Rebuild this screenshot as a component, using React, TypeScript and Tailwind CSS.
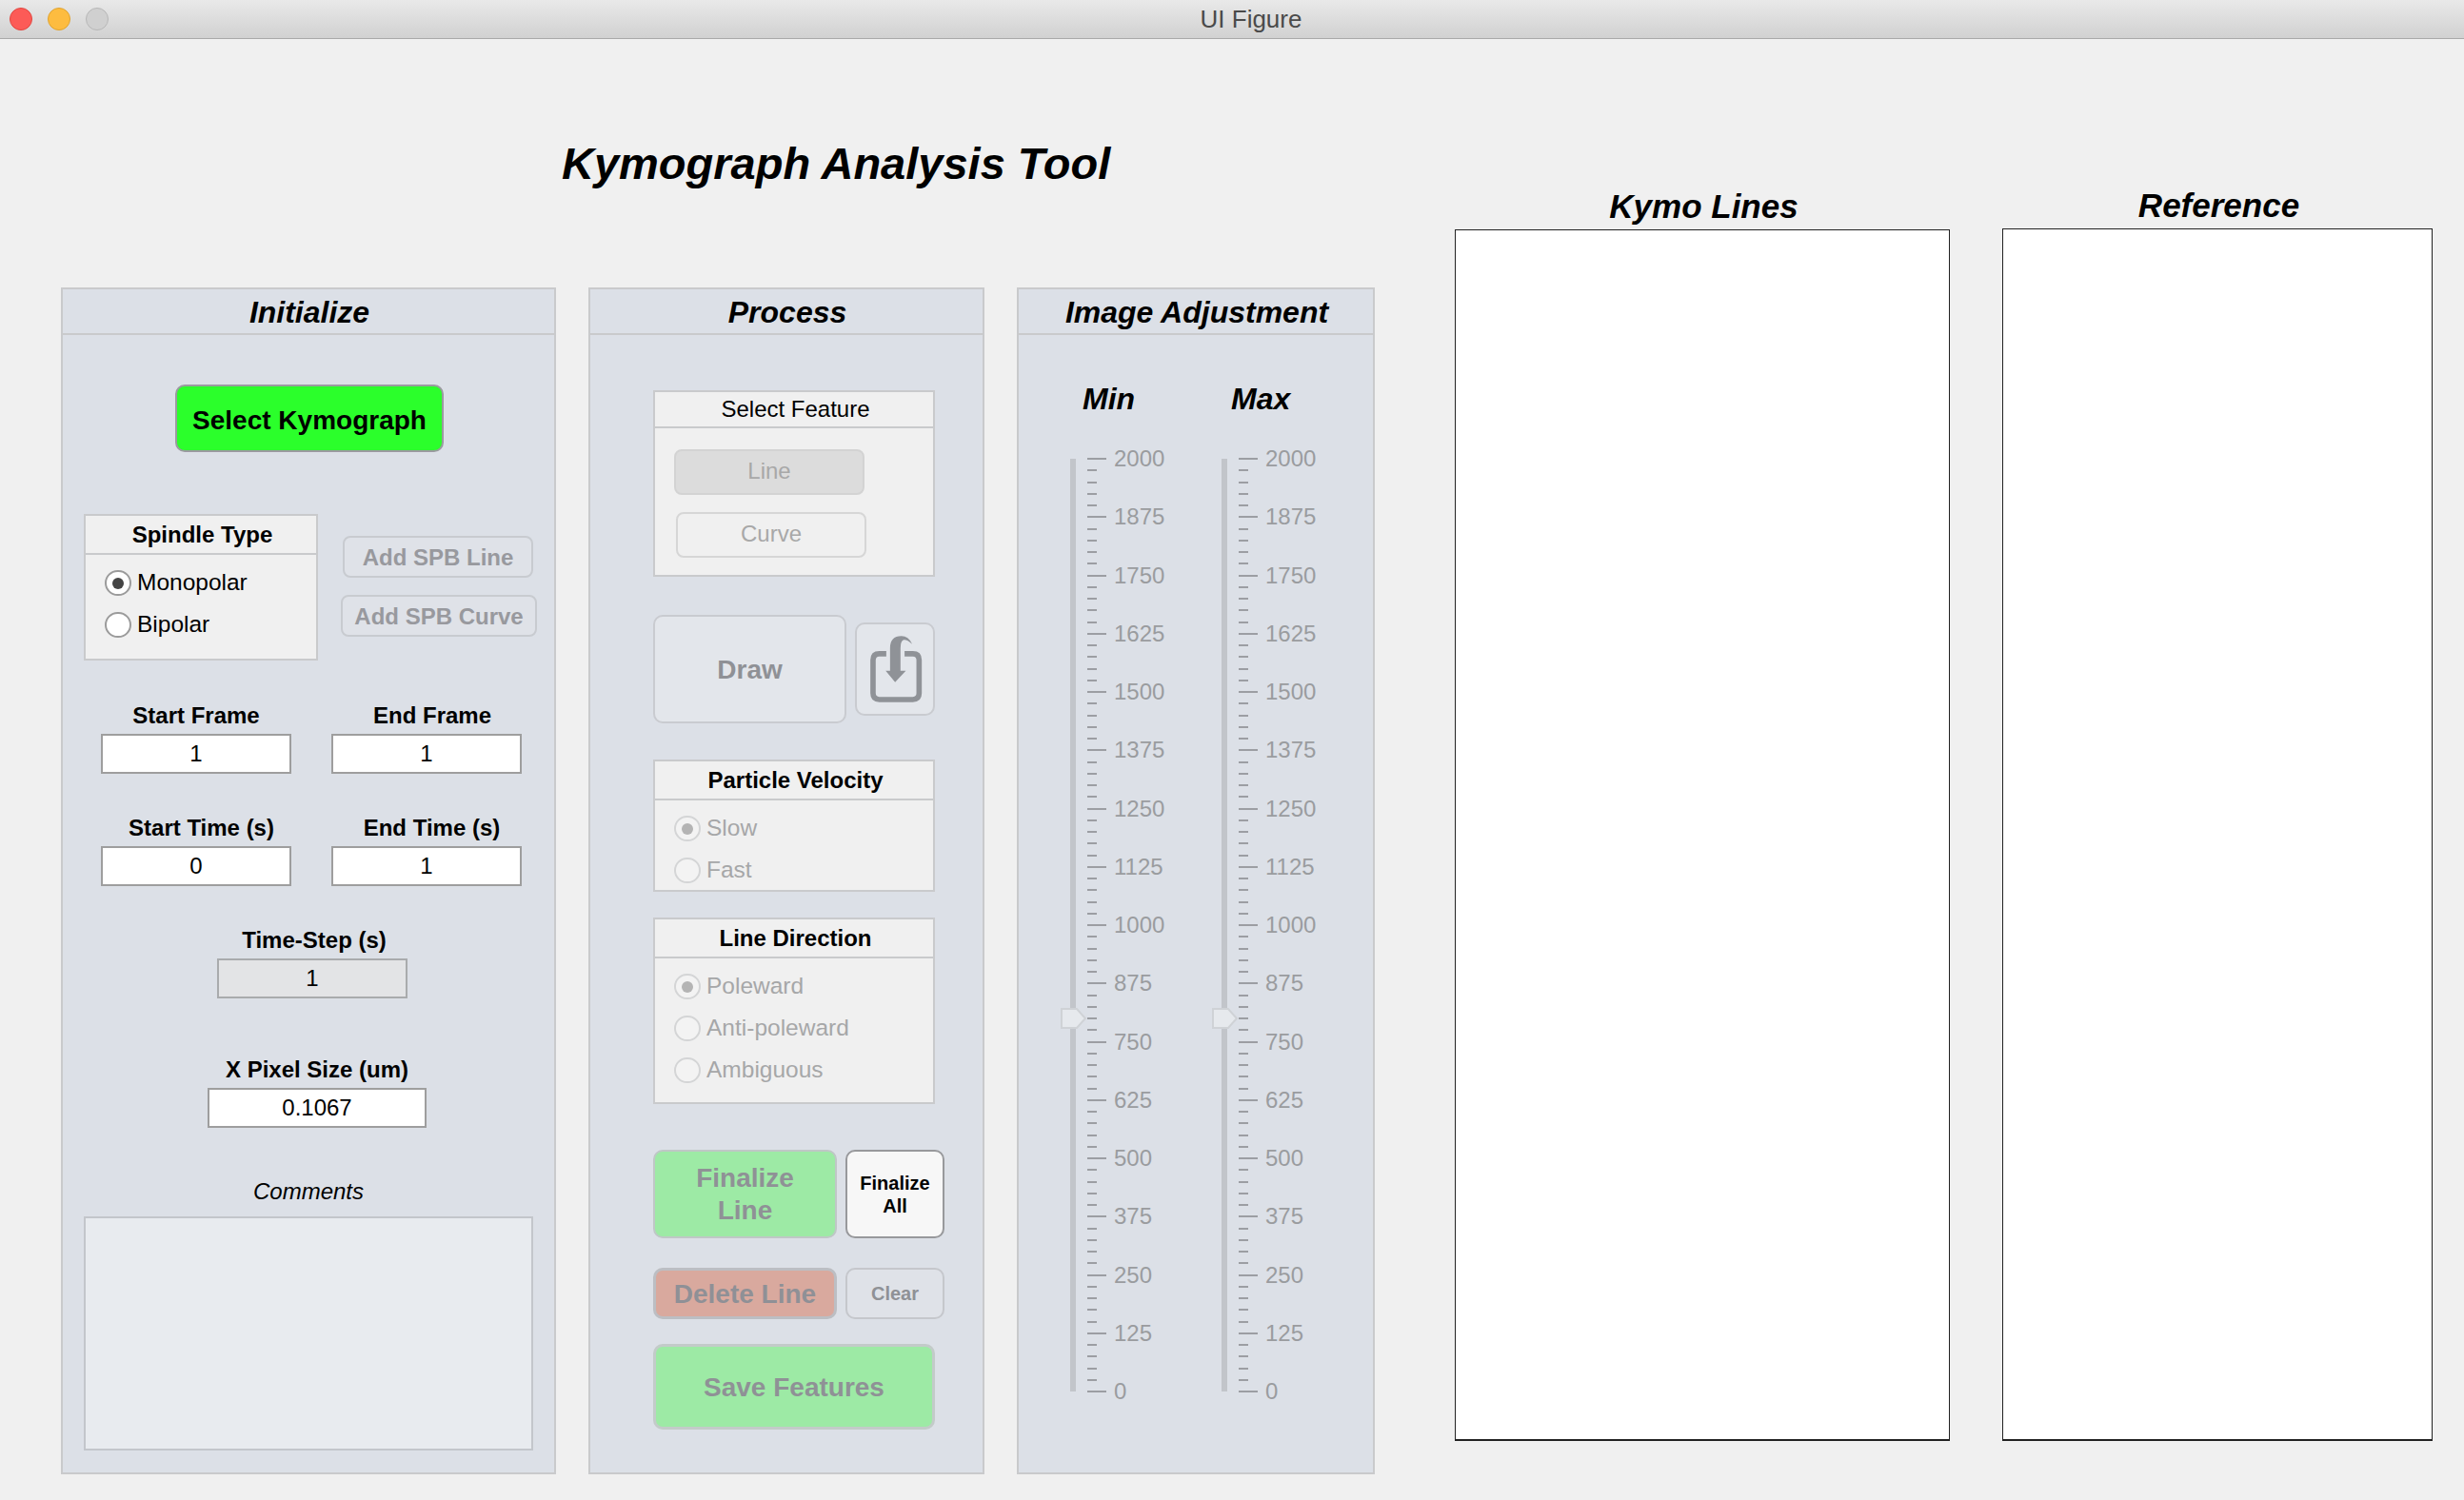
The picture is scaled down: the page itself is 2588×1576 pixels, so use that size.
import { ReactNode } from 'react';

const ticks = Array.from({ length: 81 }, (_, i) => i);

function Radio({ label, checked, disabled }: { label: string; checked?: boolean; disabled?: boolean }) {
  return (
    <div className="flex items-center gap-[6px] h-[27px]">
      <span
        className={`flex items-center justify-center w-[28px] h-[27px] rounded-full border-2 ${
          disabled ? 'border-[#d4d5d6] bg-[#f3f3f3]' : 'border-[#9b9b9b] bg-white'
        }`}
      >
        {checked && <span className={`w-[12px] h-[12px] rounded-full ${disabled ? 'bg-[#b4b4b4]' : 'bg-[#444444]'}`} />}
      </span>
      <span className={`pb-[2px] text-[24.5px] leading-[27px] ${disabled ? 'text-[#a6a7a8]' : 'text-black'}`}>{label}</span>
    </div>
  );
}

function Group({ title, bold, headerH, className, children }: { title: string; bold?: boolean; headerH: string; className: string; children: ReactNode }) {
  return (
    <div className={`flex flex-col border-2 border-[#c9cacc] bg-[#f0f0f0] ${className}`}>
      <div className={`flex items-center justify-center pl-[3px] border-b-2 border-[#c9cacc] text-[24px] text-black ${headerH} ${bold ? 'font-bold' : ''}`}>
        {title}
      </div>
      {children}
    </div>
  );
}

function Field({ label, value, width, labelClass, disabled }: { label: string; value: string; width: string; labelClass?: string; disabled?: boolean }) {
  return (
    <div className={`flex flex-col items-center ${width}`}>
      <div className={`h-[28px] pt-[1px] text-[24px] leading-[28px] font-bold text-black whitespace-nowrap ${labelClass ?? ''}`}>{label}</div>
      <input
        readOnly
        value={value}
        className={`mt-[6px] h-[42px] w-full border-2 text-center text-[24px] text-black outline-none ${
          disabled ? 'bg-[#e3e4e6] border-[#a9abad]' : 'bg-white border-[#9e9e9e]'
        }`}
      />
    </div>
  );
}

function Slider({ title }: { title: string }) {
  return (
    <div className="relative flex w-[160px] h-[982px]">
      <div className="mt-[1px] w-[6px] h-[980px] bg-[#c2c5ca]" />
      <div className="ml-[12px] flex flex-col justify-between h-[982px]">
        {ticks.map((i) => (
          <div key={i} className="flex items-center h-[2px]">
            <div className={`h-[2px] bg-[#9c9ea3] ${i % 5 === 0 ? 'w-[20px]' : 'w-[10px]'}`} />
            {i % 5 === 0 && (
              <span className="ml-[8px] text-[24px] leading-[28px] text-[#9a9c9f]">{2000 - i * 25}</span>
            )}
          </div>
        ))}
      </div>
      {/* slider thumb sits over the track */}
      <svg aria-label={title} className="absolute left-[-10px] top-[577px]" width="28" height="24" viewBox="0 0 28 24">
        <path d="M1 2 H17 L26 12 L17 22 H1 Z" fill="#e6e9ed" stroke="#cfd2d6" strokeWidth="2" />
      </svg>
    </div>
  );
}

function PanelHeader({ title }: { title: string }) {
  return (
    <div className="flex items-center justify-center h-[48px] pt-[2px] pl-[2px] border-b-2 border-[#c9cacc] text-[32px] font-bold italic text-black">
      {title}
    </div>
  );
}

function InitializePanel() {
  return (
    <section className="w-[520px] h-[1247px] border-2 border-[#c9cacc] bg-[#dce0e7]">
      <PanelHeader title="Initialize" />
      <button className="block mt-[52px] ml-[118px] w-[282px] h-[71px] pt-[5px] rounded-[10px] border-2 border-[#9a9a9f] bg-[#2bff2b] text-[28px] font-bold text-black">
        Select Kymograph
      </button>

      <div className="flex mt-[65px] ml-[22px]">
        <Group title="Spindle Type" bold headerH="h-[41px]" className="w-[246px] h-[154px]">
          <div className="flex flex-col gap-[17px] pt-[16px] pl-[20px]">
            <Radio label="Monopolar" checked />
            <Radio label="Bipolar" />
          </div>
        </Group>
        <div className="flex flex-col">
          <button disabled className="mt-[23px] ml-[26px] w-[200px] h-[44px] pt-[2px] rounded-[8px] border-2 border-[#c8cbd0] bg-[#dfe2e8] text-[24px] font-bold text-[#98999e]">
            Add SPB Line
          </button>
          <button disabled className="mt-[18px] ml-[24px] w-[206px] h-[44px] pt-[2px] rounded-[8px] border-2 border-[#c8cbd0] bg-[#dfe2e8] text-[24px] font-bold text-[#98999e]">
            Add SPB Curve
          </button>
        </div>
      </div>

      <div className="flex gap-[42px] mt-[43px] ml-[40px]">
        <Field label="Start Frame" value="1" width="w-[200px]" />
        <Field label="End Frame" value="1" width="w-[200px]" labelClass="ml-[12px]" />
      </div>
      <div className="flex gap-[42px] mt-[42px] ml-[40px]">
        <Field label="Start Time (s)" value="0" width="w-[200px]" labelClass="ml-[11px]" />
        <Field label="End Time (s)" value="1" width="w-[200px]" labelClass="ml-[11px]" />
      </div>
      <div className="flex mt-[42px] ml-[162px]">
        <Field label="Time-Step (s)" value="1" width="w-[200px]" labelClass="ml-[4px]" disabled />
      </div>
      <div className="flex mt-[60px] ml-[152px]">
        <Field label="X Pixel Size (um)" value="0.1067" width="w-[230px]" />
      </div>

      <div className="mt-[53px] h-[28px] text-center text-[24px] leading-[28px] italic text-black">Comments</div>
      <textarea
        readOnly
        className="block mt-[12px] ml-[22px] w-[472px] h-[246px] resize-none border-2 border-[#c3c6cb] bg-[#e8ebef] outline-none"
      />
    </section>
  );
}

function ProcessPanel() {
  return (
    <section className="w-[416px] h-[1247px] border-2 border-[#c9cacc] bg-[#dce0e7]">
      <PanelHeader title="Process" />

      <Group title="Select Feature" headerH="h-[38px]" className="mt-[58px] ml-[66px] w-[296px] h-[196px]">
        <button disabled className="block mt-[22px] ml-[20px] w-[200px] h-[48px] pb-[2px] rounded-[8px] border-2 border-[#d3d3d3] bg-[#dcdcdc] text-[24px] text-[#a8a8a8]">
          Line
        </button>
        <button disabled className="block mt-[18px] ml-[22px] w-[200px] h-[48px] pb-[2px] rounded-[8px] border-2 border-[#d6d6d6] bg-[#f0f0f0] text-[24px] text-[#a8a8a8]">
          Curve
        </button>
      </Group>

      <div className="flex items-center mt-[40px] ml-[66px]">
        <button disabled className="w-[203px] h-[114px] pt-[2px] rounded-[10px] border-2 border-[#c9cbd0] bg-[#e3e6eb] text-[28px] font-bold text-[#8f9196]">
          Draw
        </button>
        <button disabled className="flex items-center justify-center ml-[9px] w-[84px] h-[98px] rounded-[10px] border-2 border-[#c9cbd0] bg-[#e3e6eb]">
          <svg width="59" height="73" viewBox="90 108 178 220" fill="none">
            <path d="M150 168 H128 Q108 168 108 188 V293 Q108 313 128 313 H234 Q254 313 254 293 V188 Q254 168 234 168 H208" stroke="#8f9297" strokeWidth="17" />
            <path d="M148 222 H162 V150 Q162 112 198 112 Q220 112 232 137 Q215 122 205 124 Q195 127 195 150 V222 H212 L178 258 Z" fill="#8f9297" />
          </svg>
        </button>
      </div>

      <Group title="Particle Velocity" bold headerH="h-[41px]" className="mt-[38px] ml-[66px] w-[296px] h-[139px]">
        <div className="flex flex-col gap-[17px] pt-[16px] pl-[20px]">
          <Radio label="Slow" checked disabled />
          <Radio label="Fast" disabled />
        </div>
      </Group>

      <Group title="Line Direction" bold headerH="h-[41px]" className="mt-[27px] ml-[66px] w-[296px] h-[196px]">
        <div className="flex flex-col gap-[17px] pt-[16px] pl-[20px]">
          <Radio label="Poleward" checked disabled />
          <Radio label="Anti-poleward" disabled />
          <Radio label="Ambiguous" disabled />
        </div>
      </Group>

      <div className="flex mt-[48px] ml-[66px]">
        <button disabled className="w-[193px] h-[93px] pt-[1px] rounded-[10px] border-2 border-[#bfc7c6] bg-[#9deaa5] text-[28px] leading-[34px] font-bold text-[#8f9196]">
          Finalize
          <br />
          Line
        </button>
        <button className="ml-[9px] w-[104px] h-[93px] rounded-[10px] border-2 border-[#98999c] bg-[#f7f7f7] text-[20px] leading-[24px] font-bold text-black">
          Finalize
          <br />
          All
        </button>
      </div>

      <div className="flex mt-[31px] ml-[66px]">
        <button disabled className="w-[193px] h-[54px] pt-[2px] rounded-[10px] border-[3px] border-[#bcbec3] bg-[#d9a99e] text-[28px] font-bold text-[#8f9096]">
          Delete Line
        </button>
        <button disabled className="ml-[9px] w-[104px] h-[54px] rounded-[10px] border-2 border-[#c5c7cc] bg-[#dfe2e8] text-[20px] font-bold text-[#8f9196]">
          Clear
        </button>
      </div>

      <button disabled className="block mt-[26px] ml-[66px] w-[296px] h-[90px] pt-[2px] rounded-[10px] border-[3px] border-[#c3cbc9] bg-[#9deaa5] text-[28px] font-bold text-[#8f9196]">
        Save Features
      </button>
    </section>
  );
}

function ImagePanel() {
  return (
    <section className="w-[376px] h-[1247px] border-2 border-[#c9cacc] bg-[#dce0e7]">
      <PanelHeader title="Image Adjustment" />
      <div className="flex mt-[47px] ml-[67px] h-[40px] text-[32px] leading-[40px] font-bold italic text-black">
        <span className="w-[156px]">Min</span>
        <span>Max</span>
      </div>
      <div className="flex mt-[42px] ml-[54px]">
        <Slider title="Min" />
        <Slider title="Max" />
      </div>
    </section>
  );
}

function AxesBox({ title, className, boxClass }: { title: string; className: string; boxClass: string }) {
  return (
    <div className={`flex flex-col ${className}`}>
      <div className="h-[40px] pl-[3px] text-center text-[35px] leading-[40px] font-bold italic text-black whitespace-nowrap">{title}</div>
      <div className={`mt-[4px] bg-white border border-b-2 border-[#222222] ${boxClass}`} />
    </div>
  );
}

export default function App() {
  return (
    <div className="flex flex-col w-[2588px] h-[1576px] overflow-hidden bg-[#f0f0f0] font-['Liberation_Sans',Arial,sans-serif]">
      <header className="grid grid-cols-[1fr_auto_1fr] items-center h-[41px] border-b border-[#a9a9a9] bg-gradient-to-b from-[#e9e9e9] to-[#d1d1d1]">
        <div className="flex gap-[16px] pl-[10px]">
          <span className="w-[24px] h-[24px] rounded-full bg-[#fc5b57] border border-[#e2463f]" />
          <span className="w-[24px] h-[24px] rounded-full bg-[#fdbc40] border border-[#e0a32e]" />
          <span className="w-[24px] h-[24px] rounded-full bg-[#d0d0d0] border border-[#b7b7b7]" />
        </div>
        <div className="ml-[40px] text-[26px] text-[#4a4a4a]">UI Figure</div>
        <div />
      </header>

      <main className="flex flex-1 pl-[64px]">
        <div className="flex flex-col w-[1380px]">
          <div className="h-[261px] pt-[103px] pl-[526px] text-[47px] leading-[56px] font-bold italic text-black whitespace-nowrap">
            Kymograph Analysis Tool
          </div>
          <div className="flex">
            <InitializePanel />
            <div className="ml-[34px]">
              <ProcessPanel />
            </div>
            <div className="ml-[34px]">
              <ImagePanel />
            </div>
          </div>
        </div>
        <AxesBox title="Kymo Lines" className="ml-[84px] w-[520px] pt-[156px]" boxClass="h-[1273px]" />
        <AxesBox title="Reference" className="ml-[55px] w-[452px] pt-[155px]" boxClass="h-[1274px]" />
      </main>
    </div>
  );
}
